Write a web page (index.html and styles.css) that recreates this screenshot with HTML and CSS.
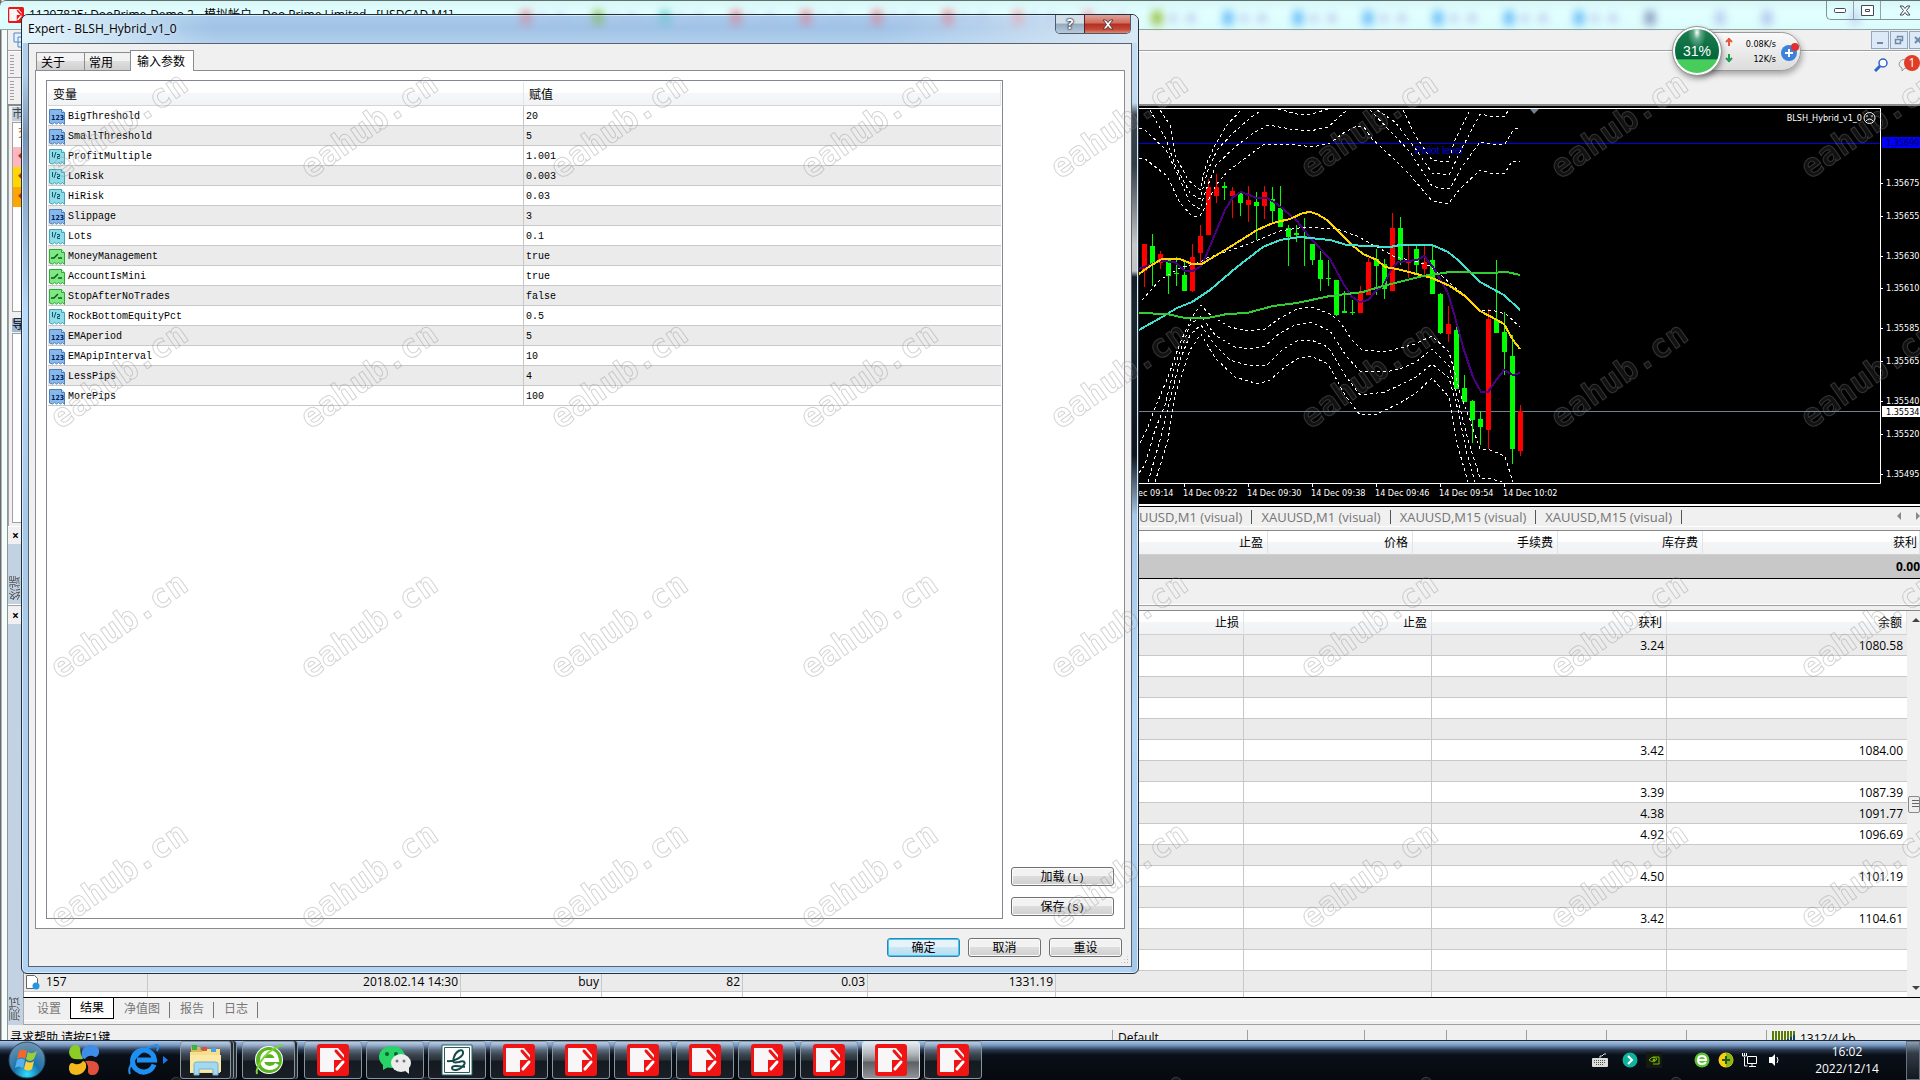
FILE: index.html
```html
<!DOCTYPE html>
<html lang="zh-CN">
<head>
<meta charset="UTF-8">
<meta name="viewport" content="width=device-width, initial-scale=1.0">
<title>Expert - BLSH_Hybrid_v1_0</title>
<link rel="stylesheet" href="styles.css">
</head>
<body>

<!-- Shared icons -->
<svg class="defs" aria-hidden="true">
    <symbol id="i-int" viewBox="0 0 16 16">
        <path d="M.5 .5h12l3 3v12l-2-2-2 1.500-2-1.500-2 1.500-2-1.500-2 1.500-3-1z" fill="#86b8ec" stroke="#4a80bd"/>
        <path d="M12.500 .5v3h3" fill="#d8eaff" stroke="#4a80bd"/>
        <text x="2" y="11" font-size="7" font-weight="bold" font-family="DejaVu Sans Condensed" fill="#08245c">123</text>
    </symbol>
    <symbol id="i-double" viewBox="0 0 16 16">
        <path d="M.5 .5h12l3 3v12l-2-2-2 1.500-2-1.500-2 1.500-2-1.500-2 1.500-3-1z" fill="#8edcea" stroke="#43a6b8"/>
        <path d="M12.500 .5v3h3" fill="#d8f8ff" stroke="#43a6b8"/>
        <path d="M3.500 3v5M7 3 5 9M8 5.500h2.500v2H8.500v2H11" fill="none" stroke="#0a5563"/>
    </symbol>
    <symbol id="i-bool" viewBox="0 0 16 16">
        <path d="M.5 .5h12l3 3v12l-2-2-2 1.500-2-1.500-2 1.500-2-1.500-2 1.500-3-1z" fill="#7ee884" stroke="#2ea836"/>
        <path d="M12.500 .5v3h3" fill="#d4ffd8" stroke="#2ea836"/>
        <path d="M2 9h3l4-4M9 9h4" fill="none" stroke="#0b5c14" stroke-width="1.500"/>
    </symbol>
    <symbol id="i-mt" viewBox="0 0 32 32">
        <rect width="32" height="32" rx="3" fill="#f01414"/>
        <path d="M3 4h17v12h-3v12H3z" fill="#f8f6f6"/>
        <path d="M17 4h12v12H17z" fill="#f01414"/>
        <path d="M3 4h14l3 12h-3v12H3z" fill="#f8f6f6"/>
        <path d="M17 4h4l6 7v5H17z" fill="#f8f6f6"/>
        <path d="m19 7 7 8" stroke="#f01414" stroke-width="3" stroke-linecap="round"/>
        <path d="m20 25 6-7" stroke="#fff" stroke-width="3" stroke-linecap="round"/>
    </symbol>
    <symbol id="i-e" viewBox="0 0 32 32">
        <path d="M27 20.500A11 11 0 1 1 27.500 16H10" fill="none" stroke="currentColor" stroke-width="5"/>
        <path d="M3 30C-1 22 14 4 29 1c3 0 2 4 1 6" fill="none" stroke="currentColor" stroke-width="2"/>
    </symbol>
</svg>

<main class="terminal">
    <header class="titlebar">
        <svg class="glass" width="1920" height="30" id="glass"></svg>
        <svg class="app-icon"><use href="#i-mt"/></svg>
        <span class="app-title">11297825: DooPrime-Demo 2 - 模拟帐户 - Doo Prime Limited - [USDCAD,M1]</span>
        <div class="sysbuttons">
            <button aria-label="最小化"><svg width="12" height="5"><rect x=".5" y=".5" width="11" height="4" rx="1" fill="#fff" stroke="#444a5a"/></svg></button>
            <button aria-label="还原"><svg width="13" height="11"><path d="M.5.5h12v10H.5zM4.500 4.500h4v2h-4z" fill="#fff" stroke="#444a5a"/></svg></button>
            <button aria-label="关闭"><svg width="12" height="11"><path d="M1 1h3l2 2.500L8 1h3L7.500 5.500 11 10H8L6 7.500 4 10H1l3.500-4.500z" fill="#fff" stroke="#444a5a"/></svg></button>
        </div>
    </header>

    <div class="menubar">
        <svg class="menu-icon" width="14" height="16"><path d="M1 1h8v9H1zM5 5h8v10H5z" fill="#e8f2fc" stroke="#4a86cc"/></svg>
        <div class="mdi">
            <button aria-label="最小化"><svg width="10" height="10"><path d="M2 8h6" stroke="#6f8aa8" stroke-width="2"/></svg></button>
            <button aria-label="还原"><svg width="10" height="10"><path d="M3.500 3V1.500h5v4H7M1.500 4.500h5v4h-5z" fill="none" stroke="#6f8aa8" stroke-width="1.500"/></svg></button>
            <button aria-label="关闭"><svg width="10" height="10"><path d="m2 2 6 6M8 2 2 8" stroke="#6f8aa8" stroke-width="2"/></svg></button>
        </div>
    </div>
    <div class="toolbar">
        <div class="toolbar-row"><span class="grip"></span>
            <div class="notify">
                <svg width="14" height="14"><circle cx="9" cy="5" r="4" fill="#fff" stroke="#2f62d0" stroke-width="1.500"/><path d="m6 8-5 5" stroke="#2f62d0" stroke-width="3"/></svg>
                <svg width="14" height="14"><path d="M1 6q1-5 8-5h5v9H7l-3 3V10Q1 9 1 6z" fill="#eceef2" stroke="#9a9a9a"/></svg>
                <b class="badge">1</b>
            </div>
        </div>
        <div class="toolbar-row"><span class="grip"></span></div>
    </div>

    <section class="workspace">
        <aside class="docks">
            <h2 class="dock-title">市</h2>
            <div class="watch">
                <p class="watch-head">交</p>
                <p class="pink">◆</p>
                <p class="gold">◆</p>
                <p class="orange">◆</p>
            </div>
            <h2 class="dock-title active">导</h2>
            <div class="navigator"></div>
        </aside>
        <div class="charts">
            <svg class="chart" id="chart" viewBox="208 106 1712 398" preserveAspectRatio="xMaxYMin slice">
                <path d="M208 108.500h1672.500v375H208" fill="none" stroke="#fff"/>
                <path d="M208 143.500h1672" stroke="#0000e8"/>
                <path d="M208 411.500h1672" stroke="#708090"/>
                <path d="M1530 109h9l-5 5z" fill="#708090"/>
                <text x="1415" y="154" class="pivot">Piviot level</text>
                <g id="candles" shape-rendering="crispEdges"></g>
                <g class="bands" shape-rendering="crispEdges">
                    <path d="M1139 158h5l23 18 13 27 12 13h8l6-11 10-20 12-14 19-14 16-12 7-1 27 1 16 2 17-4 15-11 12-6 7 1 8 12 21 19 17 17 22 26 16 3 12-15 20-19 10 3h15l7-12h8"/>
                    <path d="M1139 128l5 1 22 21 12 25 12 28 10 6 6-19 10-25 19-18 17-13 16-9 22 4 20 2 18-4 19-17M1370 110l23 24 17 18 22 34 8 2 10 1 11-21 19-26 10 2h15l9-15 6-1"/>
                    <path d="M1150 110l16 29 9 26 15 28 10 6 8-29 9-20 15-16 18-16 12-8M1278 109l19 5h15l16-5M1377 110l18 12 20 26 17 25 17 2 11-23 20-38 10 2h15l4-7"/>
                    <path d="M1160 110l10 15 5 30 13 25 12 10 6-25 9-20 12-20 14-15M1403 110l12 25 10 15 7 10 16 2 7-22 15-30"/>
                    <path d="M1142 300l18-20 20-12 20-6 7-4 33-11 23-9 17-7 25-4 32 2 20 7 20 11 18 10 20 4 15 5 20 17 15 13 15 14 15 1 11 3 14 13"/>
                    <path d="M1140 443l8-16 7-19 13-31 12-34 12-26 9-12 7 8 7 5 15 9 18 4 17-2 15-11 17-9 15-2 18 7 10 8 12 18 10 10 23 2 15-4 15-4 17-8 17 16 6 21 5 20 10 27 10 29 10 1 10 4 5 3 8 25"/>
                    <path d="M1139 473l6-8 10-35 10-25 10-40 15-40 11-9 14 19 20 12 15 2 15-3 15-13 15-8 16-3 19 9 17 26 13 14 25 1 15-3 16-7 16-13 17 17 9 34 10 40 12 38 12 1 10 3"/>
                    <path d="M1148 482l12-42 10-40 10-40 10-25 11-10 14 20 15 15 20 6 17-1 15-15 15-9 14-1 17 7 17 28 15 20 25-3 15-7 16-8 16-13 17 14 9 32 8 40 9 32"/>
                    <path d="M1155 482l13-42 7-45 15-45 11-16 14 24 20 19 23 7 12-4 15-13 12-8 14-3 17 8 17 31 15 20 17-1 23-11 16-10 16-15 17 19 7 43 12 42"/>
                </g>
                <g class="averages" shape-rendering="crispEdges">
                    <polyline stroke="#4b0082" points="1139,269 1160,261 1175,262 1185,271 1193,271 1201,266 1205,258 1225,210 1233,197 1241,192 1257,198 1267,198 1277,204 1297,221 1312,240 1330,259 1343,283 1352,297 1360,302 1368,300 1377,290 1383,286 1392,268 1398,262 1417,260 1424,256 1433,267 1448,293 1455,317 1463,347 1473,377 1481,392 1488,392 1497,379 1504,370 1513,375 1520,373"/>
                    <polyline stroke="#ffd700" points="1139,274 1150,266 1162,259 1180,259 1192,264 1202,264 1210,259 1230,247 1257,230 1273,223 1290,219 1303,213 1310,212 1317,214 1327,220 1340,233 1352,245 1363,254 1377,260 1385,267 1397,269 1432,278 1450,286 1465,296 1480,311 1497,320 1504,324 1513,340 1520,349"/>
                    <polyline stroke="#40e0d0" points="1139,330 1162,317 1177,308 1192,302 1210,290 1237,267 1263,247 1280,240 1300,237 1330,240 1347,245 1390,247 1400,245 1432,245 1448,252 1458,260 1480,282 1504,295 1520,310"/>
                    <polyline stroke="#32cd32" points="1139,313 1167,314 1185,318 1208,318 1227,314 1247,313 1273,306 1297,303 1330,296 1363,292 1383,286 1423,276 1450,272 1490,273 1507,272 1520,275"/>
                </g>
                <text x="1862" y="121" class="axis" text-anchor="end">BLSH_Hybrid_v1_0</text>
                <g fill="none" stroke="#fff"><circle cx="1869.500" cy="118" r="5.500"/><path d="M1866 121q3.500-4 7 0M1866 116h2M1871 116h2"/></g>
                <g id="prices"></g>
                <g id="times"></g>
            </svg>
            <nav class="chart-tabs">
                <a href="#">XAUUSD,M1 (visual)</a>
                <a href="#">XAUUSD,M1 (visual)</a>
                <a href="#">XAUUSD,M15 (visual)</a>
                <a href="#">XAUUSD,M15 (visual)</a>
                <span class="scroller"><i class="left"></i><i class="right"></i></span>
            </nav>
        </div>
    </section>

    <section class="panel trade">
        <div class="strip"><button aria-label="关闭终端">×</button><span>终端</span></div>
        <table class="trade-table">
            <colgroup><col><col class="w-profit-hidden"><col class="w-fee"><col class="w-fee"><col class="w-fee"><col class="w-total"></colgroup>
            <thead><tr><th></th><th>止盈</th><th>价格</th><th>手续费</th><th>库存费</th><th>获利</th></tr></thead>
            <tbody><tr><td colspan="6">0.00</td></tr></tbody>
        </table>
    </section>

    <section class="panel tester">
        <div class="strip"><button aria-label="关闭测试">×</button><span>测试</span></div>
        <div class="tester-main">
            <div class="results">
                <table class="result-table">
                    <colgroup><col class="c-id"><col class="c-time"><col class="c-type"><col class="c-type"><col class="c-lot"><col class="c-price"><col class="c-price"><col class="c-price"><col class="c-profit"><col></colgroup>
                    <thead><tr><th>#</th><th>时间</th><th>类型</th><th>订单</th><th>手数</th><th>价格</th><th>止损</th><th>止盈</th><th>获利</th><th>余额</th></tr></thead>
                    <tbody id="results"></tbody>
                </table>
                <div class="scrollbar"><i class="up"></i><i class="thumb"></i><i class="down"></i></div>
            </div>
            <nav class="tester-tabs">
                <a href="#">设置</a><a href="#" class="current">结果</a><a href="#">净值图</a><a href="#">报告</a><a href="#">日志</a>
            </nav>
        </div>
    </section>

    <footer class="status">
        <span class="help">寻求帮助,请按F1键</span>
        <span class="s-profile">Default</span>
        <span class="s-date"></span>
        <span class="s-price"></span>
        <span class="s-small"></span>
        <span class="s-small"></span>
        <span class="s-small"></span>
        <span class="s-small"></span>
        <span class="s-net"><svg width="23" height="14"><path d="M1 0v14M4 0v14M7 0v14M10 0v14M13 0v14M16 0v14M19 0v14M22 0v14" stroke="#5c7a08" stroke-width="2"/><path d="M7 13v1M10 11v3M13 9v5M16 8v6M19 6v8M22 4v10" stroke="#10456e" stroke-width="2"/></svg>1312/4 kb</span>
    </footer>
</main>

<!-- Expert properties dialog -->
<section class="dialog" role="dialog" aria-labelledby="dialog-title">
    <header class="dialog-title">
        <svg class="glass" width="1116" height="28" id="dialogGlass"></svg>
        <h1 id="dialog-title">Expert - BLSH_Hybrid_v1_0</h1>
        <div class="dialog-buttons">
            <button aria-label="帮助">?</button><button class="close" aria-label="关闭"><svg width="12" height="11"><path d="M1 1h3l2 2.500L8 1h3L7.500 5.500 11 10H8L6 7.500 4 10H1l3.500-4.500z" fill="#fff" stroke="#5a3a44"/></svg></button>
        </div>
    </header>
    <div class="dialog-body">
        <nav class="tabs">
            <button class="tab">关于</button><button class="tab second">常用</button><button class="tab current">输入参数</button>
        </nav>
        <div class="pane">
            <div class="list">
                <table class="inputs">
                    <colgroup><col class="name"><col></colgroup>
                    <thead><tr><th>变量</th><th>赋值</th></tr></thead>
                    <tbody>
                        <tr><td><svg><use href="#i-int"/></svg>BigThreshold</td><td>20</td></tr>
                        <tr><td><svg><use href="#i-int"/></svg>SmallThreshold</td><td>5</td></tr>
                        <tr><td><svg><use href="#i-double"/></svg>ProfitMultiple</td><td>1.001</td></tr>
                        <tr><td><svg><use href="#i-double"/></svg>LoRisk</td><td>0.003</td></tr>
                        <tr><td><svg><use href="#i-double"/></svg>HiRisk</td><td>0.03</td></tr>
                        <tr><td><svg><use href="#i-int"/></svg>Slippage</td><td>3</td></tr>
                        <tr><td><svg><use href="#i-double"/></svg>Lots</td><td>0.1</td></tr>
                        <tr><td><svg><use href="#i-bool"/></svg>MoneyManagement</td><td>true</td></tr>
                        <tr><td><svg><use href="#i-bool"/></svg>AccountIsMini</td><td>true</td></tr>
                        <tr><td><svg><use href="#i-bool"/></svg>StopAfterNoTrades</td><td>false</td></tr>
                        <tr><td><svg><use href="#i-double"/></svg>RockBottomEquityPct</td><td>0.5</td></tr>
                        <tr><td><svg><use href="#i-int"/></svg>EMAperiod</td><td>5</td></tr>
                        <tr><td><svg><use href="#i-int"/></svg>EMApipInterval</td><td>10</td></tr>
                        <tr><td><svg><use href="#i-int"/></svg>LessPips</td><td>4</td></tr>
                        <tr><td><svg><use href="#i-int"/></svg>MorePips</td><td>100</td></tr>
                    </tbody>
                </table>
            </div>
            <div class="side">
                <button class="btn">加载<kbd>(L)</kbd></button>
                <button class="btn">保存<kbd>(S)</kbd></button>
            </div>
        </div>
        <footer class="actions">
            <button class="btn default">确定</button>
            <button class="btn">取消</button>
            <button class="btn">重设</button>
        </footer>
        <span class="resize"></span>
    </div>
</section>

<!-- Network speed widget -->
<aside class="speed">
    <div class="ball">31%</div>
    <div class="pill">
        <svg width="8" height="28"><path d="M4 0v8M1 4l3-3 3 3" stroke="#e8573c" stroke-width="2" fill="none"/><path d="M4 16v8M1 20l3 3 3-3" stroke="#1f9c50" stroke-width="2" fill="none"/></svg>
        <p>0.08K/s<br>12K/s</p>
        <svg width="20" height="20"><circle cx="9" cy="11" r="8" fill="#3a82dc"/><path d="M9 7v8M5 11h8" stroke="#fff" stroke-width="2"/><circle cx="15" cy="5" r="4" fill="#e03030"/></svg>
    </div>
</aside>

<nav class="taskbar">
    <button class="pin start" aria-label="开始">
        <svg width="38" height="38"><defs><radialGradient id="orb" cx=".5" cy=".9" r=".9"><stop offset="0" stop-color="#2fe0ff"/><stop offset=".4" stop-color="#1872ac"/><stop offset="1" stop-color="#7795ae"/></radialGradient></defs>
            <circle cx="19" cy="19" r="18" fill="url(#orb)" stroke="#284a66"/>
            <path d="M11 10q4-3 8 0l-2 8q-4-3-8 0z" fill="#f0682c"/><path d="M20 11q4 3 9-1l-3 8q-4 4-8 0z" fill="#9cce3c"/><path d="M9 19q4-3 8 0l-2 8q-4-3-8 0z" fill="#58b0f0"/><path d="M18 20q4 3 8 0l-2 8q-4 3-8 0z" fill="#fcd03c"/></svg>
    </button>
    <button class="pin" aria-label="应用">
        <svg width="32" height="32"><path d="M15 15Q1 17 1 8q1-8 8-7 2 0 3 3 0 6 3 11z" fill="#8ccc24"/><path d="M17 15q-5-1-3-8 3-7 10-6 8 1 7 8-2 6-6 3-5-1-8 3z" fill="#3e8ee8"/><path d="M15 17q4 1 3 7-3 7-10 7-8-1-7-8 1-6 6-3 5 1 8-3z" fill="#f4b81c"/><path d="M17 17q14-2 14 7-1 8-8 7-3-1-3-4 1-6-3-10z" fill="#e0503c"/></svg>
    </button>
    <button class="pin ie" aria-label="Internet Explorer"><svg width="32" height="32"><use href="#i-e"/></svg><i></i></button>
    <button class="task folder stack" aria-label="资源管理器">
        <svg width="34" height="32"><path d="M2 3h9l1 3h18v22H2z" fill="#d8b858"/><path d="M1 8h12l2-3h16v24H1z" fill="#f6df8c"/><path d="M3 1h5v5H3z" fill="#40b040"/><path d="M13 3h5v4h-5z" fill="#d85040"/><path d="M22 4h5v4h-5z" fill="#48a0e0"/><path d="M1 11h31v17H1z" fill="#fae8a4"/><path d="M5 31V20q0-2 3-2h18q3 0 3 2v11h-5v-6H10v6z" fill="#a4d8f0" stroke="#6cb4d8"/></svg>
    </button>
    <button class="task browser stack" aria-label="浏览器"><svg width="30" height="32"><circle cx="15" cy="16" r="14" fill="#fff"/><circle cx="15" cy="16" r="13" fill="#58b420"/><path d="M23 20q-2 4-8 4-7-1-7-8t7-8q7 0 8 8H9" stroke="#fff" stroke-width="4" fill="none"/><path d="M3 30C1 22 14 4 29 1" fill="none" stroke="#7cd038" stroke-width="2"/></svg></button>
    <button class="task" aria-label="MetaTrader"><svg width="32" height="32"><use href="#i-mt"/></svg></button>
    <button class="task" aria-label="微信"><svg width="34" height="30"><ellipse cx="14" cy="12" rx="13" ry="11" fill="#28d468"/><path d="m5 18 0 7 7-4z" fill="#28d468"/><circle cx="9" cy="9" r="2" fill="#0a6030"/><circle cx="18" cy="9" r="2" fill="#0a6030"/><ellipse cx="23" cy="18" rx="10" ry="9" fill="#ececec"/><path d="m26 25 5 4v-7z" fill="#ececec"/><circle cx="19" cy="16" r="1.500" fill="#777"/><circle cx="26" cy="16" r="1.500" fill="#777"/></svg></button>
    <button class="task" aria-label="编辑器"><svg width="32" height="32"><path d="M1 1h30v30H1z" fill="#fff" stroke="#24605c"/><path d="M3.500 3.500h25v25h-25z" fill="#fff" stroke="#24605c"/><path d="M6 17c8 1 17-5 16-9s-7-1-9 5 0 6 5 5c6-2 7 1 4 4-4 5-11 5-11 2s6-2 13-1" fill="none" stroke="#144c4c" stroke-width="2"/></svg></button>
    <button class="task" aria-label="MetaTrader"><svg width="32" height="32"><use href="#i-mt"/></svg></button>
    <button class="task" aria-label="MetaTrader"><svg width="32" height="32"><use href="#i-mt"/></svg></button>
    <button class="task" aria-label="MetaTrader"><svg width="32" height="32"><use href="#i-mt"/></svg></button>
    <button class="task" aria-label="MetaTrader"><svg width="32" height="32"><use href="#i-mt"/></svg></button>
    <button class="task" aria-label="MetaTrader"><svg width="32" height="32"><use href="#i-mt"/></svg></button>
    <button class="task" aria-label="MetaTrader"><svg width="32" height="32"><use href="#i-mt"/></svg></button>
    <button class="task active" aria-label="MetaTrader"><svg width="32" height="32"><use href="#i-mt"/></svg></button>
    <button class="task" aria-label="MetaTrader"><svg width="32" height="32"><use href="#i-mt"/></svg></button>

    <div class="tray">
        <svg class="keyboard" width="16" height="16"><path d="M8 6V4l2 0 2-2 2 0" fill="none" stroke="#ddd"/><rect y="6" width="16" height="9" rx="1" fill="#ddd"/><path d="M2 8.500h12M2 10.500h12M4 12.500h8" stroke="#555" stroke-dasharray="1 1"/></svg>
        <svg width="16" height="16"><circle cx="8" cy="8" r="7.500" fill="#0eb39c"/><path d="m6 4 4 4-4 4" fill="none" stroke="#fff" stroke-width="2"/></svg>
        <svg class="nvidia" width="16" height="16"><path d="M0 0h16v16H0z" fill="#151a10"/><path d="M3 8q4-5 8-1-3 5-8 1zM7 5h6v7H7" fill="none" stroke="#76b900"/><circle cx="8" cy="8" r="1.500" fill="#76b900"/></svg>
        <svg width="16" height="16"><circle cx="8" cy="8" r="7.500" fill="#5cc432"/><path d="M12 10q-1 2-4 2-4 0-4-4t4-4q4 0 4 4H5" stroke="#fff" stroke-width="2" fill="none"/></svg>
        <svg width="16" height="16"><circle cx="8" cy="8" r="7.500" fill="#f8d010"/><path d="M8 1a7 7 0 0 1 0 14z" fill="#88b818"/><path d="M8 4v8M4 8h8" stroke="#205818" stroke-width="2"/></svg>
        <svg width="16" height="16"><path d="M5.500 4.500h9v7h-9zM10 12v3M7 14.500h7M2.500 1v3M.5 1v3h4V1M2.500 5v9h3" fill="none" stroke="#fff"/></svg>
        <svg width="16" height="16"><path d="M3 5h3l3-3v12L6 11H3z" fill="#fff"/><path d="M11 5q2 3 0 6" fill="none" stroke="#fff"/></svg>
        <time>16:02<br>2022/12/14</time>
    </div>
    <button class="show-desktop" aria-label="显示桌面"></button>
</nav>

<svg class="watermark" aria-hidden="true">
    <defs>
        <pattern id="mark" width="250" height="250" patternUnits="userSpaceOnUse">
            <text transform="translate(60 180) rotate(-35)">eahub.cn</text>
        </pattern>
    </defs>
    <rect width="100%" height="100%" fill="url(#mark)"/>
</svg>

<script src="script.js"></script>
</body>
</html>
```

FILE: styles.css
```css
* {
    box-sizing: border-box;
}
body {
    display: flex;
    flex-direction: column;
    height: 100vh;
    margin: 0;
    overflow: hidden;
    position: relative;
    color: #000;
    font: 12px/16px "Open Sans", "Noto Sans CJK SC", sans-serif;
}
button {
    margin: 0;
    padding: 0;
    border: 0;
    background: none;
    color: inherit;
    font: inherit;
}
a {
    color: inherit;
    text-decoration: none;
}
h1, h2, p {
    margin: 0;
    font: inherit;
}
svg {
    display: block;
    flex: none;
}
table {
    width: 100%;
    table-layout: fixed;
    border-collapse: separate;
    border-spacing: 0;
}
th, td {
    padding: 0;
    overflow: hidden;
    font-weight: normal;
    white-space: nowrap;
}
.defs {
    position: absolute;
    width: 0;
    height: 0;
}

/* Main window */
.terminal {
    flex: 1;
    min-height: 0;
    display: flex;
    flex-direction: column;
    padding-left: 8px;
    overflow: hidden;
    background: linear-gradient(90deg, #6a6a6a 0 1px, #f4fcfc 2px 7px, #8c9494 7px 8px, #f0f0f0 8px);
}
.titlebar {
    flex: none;
    display: flex;
    height: 30px;
    margin-left: -8px;
    border-top: 1px solid #5f6f70;
    border-bottom: 1px solid #93a5a2;
    background: linear-gradient(#d8f6f6, #e2ffff 40%, #dcfcfc);
    position: relative;
    border-radius: 6px 0 0 0;
}
.glass {
    position: absolute;
    left: 0;
    top: 0;
}
.glass g {
    filter: blur(4px);
}
.app-icon {
    width: 16px;
    height: 16px;
    margin: 6px 5px 0 8px;
    z-index: 0;
}
.app-title {
    margin-top: 6px;
    z-index: 0;
}
.sysbuttons {
    display: flex;
    margin-left: auto;
    width: 94px;
    height: 19px;
    overflow: hidden;
    border: 1px solid #7d9494;
    border-width: 0 0 1px 1px;
    border-radius: 0 0 0 5px;
    z-index: 0;
}
.sysbuttons button {
    display: flex;
    align-items: center;
    justify-content: center;
    flex: none;
    width: 27px;
    border-right: 1px solid #8fa5a5;
}
.sysbuttons button:last-child {
    width: 48px;
}
.menubar {
    flex: none;
    display: flex;
    justify-content: space-between;
    height: 22px;
    border-bottom: 1px solid #fff;
    box-shadow: inset 0 -1px #a0a0a0;
    background: #f0f0f0;
    overflow: hidden;
}
.menu-icon {
    margin: 2px 0 0 5px;
}
.mdi {
    display: flex;
    gap: 1px;
    margin-top: 1px;
    width: 49px;
}
.mdi button {
    display: flex;
    flex: none;
    align-items: center;
    justify-content: center;
    width: 18px;
    height: 18px;
    border: 1px solid #91a7bf;
    background: #dce9f6;
}
.toolbar {
    flex: none;
    height: 54px;
    background: #f0f0f0;
    border-bottom: 2px solid #8a8a8a;
}
.toolbar-row {
    display: flex;
    height: 26px;
    padding: 3px 2px;
    border-bottom: 1px solid #dcdcdc;
}
.toolbar-row + .toolbar-row {
    border: 0;
}
.toolbar-row:first-child {
    border-image: linear-gradient(90deg, #a0a0a0 40px, #f0f0f0 40px) 1;
}
.grip {
    width: 4px;
    background: repeating-linear-gradient(#a0a0a0 0 1px, #f0f0f0 1px 3px);
}
.notify {
    display: flex;
    gap: 10px;
    margin-left: auto;
    padding-top: 3px;
    position: relative;
    width: 44px;
}
.badge {
    position: absolute;
    right: -2px;
    top: 0;
    width: 16px;
    height: 16px;
    border-radius: 8px;
    background: #e03c28;
    color: #fff;
    text-align: center;
    font-weight: normal;
}

/* Docks and chart */
.workspace {
    flex: none;
    display: flex;
    height: 420px;
}
.docks {
    flex: none;
    width: 200px;
    padding: 1px 1px 0 3px;
    border-left: 1px solid #a0a0a0;
}
.dock-title {
    height: 14px;
    line-height: 14px;
    background: #bfccda;
    color: #444;
}
.dock-title.active {
    margin-top: 6px;
    background: #9db7d6;
    color: #000;
}
.watch, .navigator {
    height: 190px;
    margin-top: 1px;
    border: 1px solid #a0a0a0;
    background: #fff;
}
.watch p {
    height: 20px;
    padding-left: 5px;
    line-height: 20px;
    color: #b03010;
}
.watch .watch-head {
    height: 24px;
    color: #c07030;
}
.pink {
    background: #ffb6c1;
}
.gold {
    background: #ffd700;
}
.orange {
    background: #ffa500;
}
.charts {
    flex: 1;
    min-width: 0;
}
.chart {
    width: 100%;
    height: 398px;
    background: #000;
}
.axis {
    font: 9px "DejaVu Sans Condensed", "DejaVu Sans", sans-serif;
    fill: #fff;
}
.axis.dark {
    fill: #000;
}
.axis.blue {
    fill: #000040;
}
.pivot {
    font: 10px "Liberation Sans", sans-serif;
    fill: #0000e8;
}
.bands path {
    fill: none;
    stroke: #fff;
    stroke-dasharray: 3 3;
}
.averages polyline {
    fill: none;
    stroke-width: 2;
}
.chart-tabs {
    display: flex;
    justify-content: flex-end;
    height: 22px;
    padding-top: 3px;
    border-top: 1px solid #fff;
    box-shadow: inset 0 1px #fff, inset 0 2px #000;
    color: #757575;
    background: #f0f0f0;
}
.chart-tabs a {
    height: 14px;
    margin-top: 2px;
    padding: 0 9px;
    border-right: 1px solid #555;
    font-size: 13px;
    line-height: 14px;
    white-space: nowrap;
}
.scroller {
    display: flex;
    justify-content: flex-end;
    gap: 15px;
    width: 238px;
    padding-top: 4px;
}
.left, .right {
    height: 8px;
    border: 4px solid transparent;
    border-right-color: #888;
    border-left-width: 0;
}
.right {
    border-left: 4px solid #888;
    border-right-width: 0;
}

/* Bottom panels */
.panel {
    display: flex;
    padding-top: 4px;
    border-top: 1px solid #fff;
    background: #f0f0f0;
}
.strip {
    flex: none;
    display: flex;
    flex-direction: column;
    align-items: center;
    justify-content: space-between;
    width: 15px;
    padding: 0 1px 4px;
    background: linear-gradient(#f0f0f0 14px, #c3d2e2 14px);
    color: #555;
}
.strip button {
    height: 12px;
    color: #000;
    font-weight: bold;
    line-height: 12px;
}
.strip span {
    width: 12px;
    line-height: 12px;
    writing-mode: vertical-rl;
    transform: rotate(180deg);
}
.trade {
    flex: none;
    height: 79px;
    padding-top: 3px;
    border-bottom: 1px solid #fff;
}
.trade-table {
    height: 49px;
    border-top: 1px solid #888;
    border-bottom: 1px solid #000;
}
.w-profit-hidden {
    width: 200px;
}
.w-fee {
    width: 145px;
}
.w-total {
    width: 217px;
}
.panel th {
    height: 24px;
    padding-right: 4px;
    border-right: 1px solid #e0e3e8;
    border-bottom: 1px solid #d0d0d0;
    background: linear-gradient(#fff 45%, #f4f5f7 50%, #f1f2f4);
    text-align: right;
}
.trade-table th:last-child {
    padding-right: 2px;
}
.trade-table td {
    height: 22px;
    background: #c8c8c8;
    font-weight: bold;
    text-align: right;
}
.tester {
    flex: 1;
    min-height: 0;
    border-top-color: #a0a0a0;
    padding-top: 4px;
}
.tester-main {
    flex: 1;
    min-width: 0;
    display: flex;
    flex-direction: column;
}
.results {
    flex: 1;
    min-height: 0;
    display: flex;
    overflow: hidden;
    border-top: 1px solid #888;
    border-left: 1px solid #888;
    border-bottom: 1px solid #000;
    background: #fff;
}
.result-table {
    flex: 1;
    min-width: 0;
    height: max-content;
}
.c-id {
    width: 124px;
}
.c-time {
    width: 313px;
}
.c-type {
    width: 141px;
}
.c-lot {
    width: 125px;
}
.c-price {
    width: 188px;
}
.c-profit {
    width: 235px;
}
.result-table td {
    height: 21px;
    padding: 2px 2px 0 0;
    border-right: 1px solid #c8c8c8;
    border-bottom: 1px solid #c8c8c8;
    line-height: 18px;
    text-align: right;
}
.result-table td:last-child {
    border-right: 0;
    padding-right: 4px;
}
.result-table tr:nth-child(odd) td {
    background: #ebebeb;
}
.result-table td:first-child {
    text-align: left;
}
.order {
    display: flex;
    align-items: center;
    gap: 6px;
    padding-left: 2px;
}
.scrollbar {
    display: flex;
    flex-direction: column;
    align-items: flex-end;
    justify-content: space-between;
    width: 13px;
    overflow: hidden;
    padding: 7px 0;
    background: #f0f0f0;
}
.up, .down {
    border: 4px solid transparent;
    border-bottom: 4px solid #444;
    border-top: 0;
}
.down {
    border-top: 4px solid #444;
    border-bottom: 0;
}
.thumb {
    width: 12px;
    height: 17px;
    border: 1px solid #888;
    border-radius: 2px;
    background: repeating-linear-gradient(#666 0 1px, #eee 1px 3px) 3px 3px / 8px 9px no-repeat, #eee;
}
.tester-tabs {
    display: flex;
    flex: none;
    height: 27px;
    color: #777;
    border-left: 1px solid #aaa;
    border-bottom: 1px solid #a0a0a0;
    box-shadow: inset 0 -3px #f0f0f0, inset 0 -4px #fff;
}
.tester-tabs a {
    height: 16px;
    margin-top: 4px;
    padding: 0 9px 0 10px;
    border-right: 1px solid #777;
    line-height: 14px;
}
.tester-tabs a:first-child {
    padding-left: 13px;
    border: 0;
}
.tester-tabs .current {
    height: 21px;
    margin-top: 0;
    padding: 3px 9px 0;
    border: 1px solid #000;
    border-top: 0;
    background: #fff;
    color: #000;
}
.status {
    display: flex;
    flex: none;
    height: 15px;
    overflow: hidden;
    background: #f0f0f0;
}
.status span {
    flex: none;
    height: 20px;
    margin-top: 5px;
    padding-left: 5px;
    border-left: 1px solid #a0a0a0;
}
.status .help {
    flex: 1;
    padding-left: 2px;
    border: 0;
}
.status .s-profile {
    width: 135px;
}
.status .s-date {
    width: 117px;
}
.status .s-price {
    width: 82px;
}
.status .s-small {
    width: 80px;
}
.status .s-net {
    display: flex;
    gap: 5px;
    width: 154px;
    padding-top: 1px;
}

/* Dialog */
.dialog {
    position: absolute;
    left: 21px;
    top: 14px;
    display: flex;
    flex-direction: column;
    width: 1118px;
    height: 960px;
    padding: 0 6px 6px;
    border: 1px solid #22303c;
    border-radius: 7px 7px 6px 6px;
    box-shadow: inset 0 0 0 1px #dcecf8;
    background: linear-gradient(#c4dcf2 88px, #3a444e 100px, #333d48 150px, #c8c8c8 230px, #c4c4c4 256px, #141c24 262px, #1c2830 300px, #0c141c 440px, #a8c8e8 500px, #b4d8f8 700px, #a4c8ea) right / 7px 100% no-repeat,
        linear-gradient(#b0cfec 60px, #7894b4 120px, #b8dcfc 300px, #a8c8e8 500px, #b2d4f4);
}
.dialog-title {
    flex: none;
    display: flex;
    justify-content: space-between;
    height: 28px;
    margin: 0 -6px;
    padding: 0 7px 0 6px;
    border-radius: 6px 6px 0 0;
    box-shadow: inset 0 1px #dcecf8;
    background: linear-gradient(90deg, #e4f6fc 0, #b4d2ee00 190px, #b4d2ee00 860px, #d8e8f4), linear-gradient(#a9cbec, #a0c2e6 45%, #b2d0ee);
    position: relative;
}
.dialog-title h1 {
    margin: 5px 0 0;
    line-height: 17px;
    text-shadow: 0 0 6px #fff;
    z-index: 0;
}
.dialog-buttons {
    display: flex;
    width: 76px;
    height: 19px;
    border: 1px solid #4c5a6a;
    border-top: 0;
    border-radius: 0 0 5px 5px;
    overflow: hidden;
    color: #fff;
    font-weight: bold;
    z-index: 0;
}
.dialog-buttons button {
    display: flex;
    align-items: center;
    justify-content: center;
    width: 28px;
    background: linear-gradient(#d2dfe9 45%, #94a9bd 50%, #b6cadc);
    text-shadow: 0 0 1px #223, 0 0 2px #223, 0 0 2px #223;
    font-size: 14px;
}
.dialog-buttons .close {
    flex: 1;
    border-left: 1px solid #54222a;
    background: linear-gradient(#e0a298 0, #cf6b5c 45%, #b2301c 50%, #c4483a 80%, #e08a70);
}
.dialog-body {
    flex: 1;
    min-height: 0;
    display: flex;
    flex-direction: column;
    padding: 6px;
    border: 1px solid #59636d;
    background: #f0f0f0;
    position: relative;
}
.tabs {
    display: flex;
    align-items: flex-end;
    height: 21px;
    padding-left: 1px;
    margin-bottom: -1px;
    z-index: 0;
}
.tab {
    width: 49px;
    height: 19px;
    padding: 0 0 0 4px;
    border: 1px solid #8b8b94;
    background: linear-gradient(#f2f2f2 45%, #dedede 50%, #d0d0d0);
    line-height: 19px;
    text-align: left;
}
.tab.second {
    width: 46px;
    border-left: 0;
}
.tab.current {
    width: 64px;
    height: 21px;
    padding-left: 6px;
    border-bottom: 0;
    margin-left: -1px;
    background: #fff;
}
.pane {
    flex: 1;
    min-height: 0;
    display: flex;
    gap: 8px;
    padding: 9px 10px;
    border: 1px solid #8b8b94;
    background: #fff;
}
.list {
    flex: 1;
    border: 1px solid #828790;
    padding: 1px;
}
.inputs .name {
    width: 476px;
}
.inputs th {
    height: 24px;
    padding: 2px 0 0 5px;
    border-right: 1px solid #e4e6ea;
    border-bottom: 1px solid #d5d5d5;
    background: linear-gradient(#fff 45%, #f6f7f9 50%, #f2f3f5);
    text-align: left;
}
.inputs td {
    height: 20px;
    border-bottom: 1px solid #c8c8c8;
    padding: 2px 0 0 2px;
    font: 10px/17px "Liberation Mono", monospace;
}
.inputs td:first-child {
    display: flex;
    align-items: center;
    gap: 3px;
    padding-left: 1px;
    border-right: 1px solid #c8c8c8;
}
.inputs td svg {
    width: 16px;
    height: 16px;
}
.inputs tr:nth-child(even) td {
    background: #ebebeb;
}
.side {
    display: flex;
    flex-direction: column;
    justify-content: flex-end;
    gap: 11px;
    width: 103px;
    padding-bottom: 3px;
}
.btn {
    height: 19px;
    border: 1px solid #707070;
    border-radius: 3px;
    box-shadow: inset 0 0 0 1px #fbfbfb;
    background: linear-gradient(#f2f2f2 45%, #dddddd 50%, #cfcfcf);
    line-height: 17px;
}
.btn kbd {
    margin-left: 2px;
    font: 10px "Liberation Mono", monospace;
}
.actions {
    display: flex;
    justify-content: flex-end;
    gap: 8px;
    padding: 9px 3px 3px;
}
.actions .btn {
    width: 73px;
}
.btn.default {
    border-color: #3c7fb1;
    box-shadow: inset 0 0 0 1px #34cdf8;
    background: linear-gradient(#e6f3fa 45%, #cbe6f4 50%, #b8dcf0);
}
.resize {
    position: absolute;
    right: 2px;
    bottom: 2px;
    width: 9px;
    height: 9px;
    background: radial-gradient(#b0b0b0 1px, transparent 1px) 0 0 / 3px 3px;
    clip-path: polygon(100% 0, 100% 100%, 0 100%);
}

/* Speed widget */
.speed {
    position: absolute;
    right: 119px;
    top: 27px;
    display: flex;
    align-items: center;
    line-height: 15px;
}
.ball {
    width: 48px;
    height: 48px;
    border: 2px solid #fff;
    border-radius: 24px;
    outline: 1px solid #999;
    box-shadow: 1px 3px 6px #0007;
    background: radial-gradient(ellipse at 50% 8%, #fff 0, #5da888 12%, transparent 30%), linear-gradient(#1f7c50, #00683c 68%, #48cc5c 70%);
    color: #fff;
    font: 14px/44px "Liberation Sans", sans-serif;
    text-align: center;
    z-index: 1;
}
.pill {
    display: flex;
    align-items: center;
    gap: 4px;
    width: 104px;
    height: 39px;
    margin-left: -24px;
    padding: 2px 0 0 27px;
    border: 1px solid #999;
    border-radius: 0 20px 20px 0;
    box-shadow: 1px 3px 6px #0005;
    background: linear-gradient(#fafafa, #dcdcdc);
}
.pill p {
    width: 41px;
    text-align: right;
    white-space: nowrap;
    font-family: "DejaVu Sans Condensed", sans-serif;
    font-size: 9px;
}

/* Taskbar */
.taskbar {
    flex: none;
    display: flex;
    height: 40px;
    border-top: 1px solid #1c2a3a;
    background: linear-gradient(#a9c4e4 0, #7c9cc4 4px, #26364c 9px, #0a1018 14px, #06090f);
    position: relative;
}
.pin {
    display: flex;
    align-items: center;
    justify-content: center;
    width: 60px;
    height: 38px;
}
.pin.start {
    width: 54px;
}
.pin.ie {
    width: 66px;
    gap: 4px;
    color: #1e90f4;
}
.ie i {
    border: 4px solid transparent;
    border-left: 5px solid #1c78f0;
    border-right: 0;
}
.task {
    display: flex;
    align-items: center;
    justify-content: center;
    width: 58px;
    height: 38px;
    margin-right: 4px;
    border: 1px solid #8a949c;
    border-radius: 3px;
    background: linear-gradient(#c8dcf090, #8c9cac80 8px, #4a545c80 18px, #20262c80 19px, #2c343c80);
}
.task.active {
    border-color: #dde2e6;
    background: linear-gradient(#e6eef6, #b0b6ba 12px, #808488 19px, #5c6064 20px, #909498);
}
.task.stack {
    width: 53px;
    margin-right: 9px;
    box-shadow: 2px 0 #222a32, 3px 0 #8a949c;
}
.task.folder {
    width: 51px;
    box-shadow: 2px 0 #222a32, 3px 0 #8a949c, 5px 0 #222a32, 6px 0 #8a949c;
    margin-right: 11px;
}
.tray {
    display: flex;
    align-items: center;
    gap: 8px;
    height: 38px;
    margin-left: auto;
    color: #fff;
}
.keyboard {
    margin-right: 6px;
}
.nvidia {
    margin-right: 24px;
}
.tray time {
    width: 118px;
    line-height: 17px;
    text-align: center;
    margin-left: -2px;
}
.show-desktop {
    width: 14px;
    border: 1px solid #6a7480;
    background: linear-gradient(#8ca0b8, #343c48 30%, #14181e);
}

.watermark {
    position: absolute;
    left: 0;
    top: 0;
    width: 100%;
    height: 100%;
    pointer-events: none;
    z-index: 5;
}
.watermark text {
    font: bold 33px "DejaVu Sans Mono", monospace;
    fill: rgba(255, 255, 255, 0.07);
    stroke: rgba(128, 128, 128, 0.35);
    stroke-width: 1px;
}
```

FILE: script.js
```js
const chartLeft = 1144;
const step = 8;

// [up, high, open/close top, open/close bottom, low]
const candles = [
    [1, 244, 244, 271, 287], [0, 234, 246, 265, 286], [1, 251, 254, 263, 269], [0, 260, 260, 276, 294],
    [0, 257, 273, 274, 286], [0, 261, 275, 291, 291], [1, 244, 257, 291, 292], [1, 225, 236, 253, 263],
    [1, 179, 187, 235, 235], [1, 174, 187, 196, 203], [0, 182, 186, 188, 200], [1, 187, 191, 196, 218],
    [0, 191, 192, 203, 216], [1, 186, 200, 205, 222], [0, 192, 202, 206, 240], [1, 186, 192, 206, 219],
    [0, 187, 199, 211, 222], [0, 186, 208, 227, 227], [0, 225, 228, 237, 266], [0, 225, 233, 235, 242],
    [0, 218, 236, 238, 266], [0, 244, 244, 260, 265], [0, 251, 260, 279, 291], [0, 260, 278, 279, 286],
    [0, 280, 280, 315, 316], [0, 291, 311, 313, 313], [0, 300, 312, 313, 315], [1, 286, 293, 313, 313],
    [1, 258, 262, 295, 295], [0, 249, 259, 266, 295], [0, 259, 264, 289, 299], [1, 213, 228, 291, 291],
    [0, 217, 228, 260, 265], [1, 246, 262, 263, 278], [0, 246, 249, 265, 275], [1, 246, 262, 269, 275],
    [0, 246, 260, 294, 294], [0, 293, 294, 333, 334], [1, 306, 324, 334, 342], [0, 324, 330, 389, 389],
    [0, 375, 388, 402, 402], [0, 400, 401, 420, 443], [0, 411, 419, 427, 445], [1, 309, 319, 430, 449],
    [0, 260, 320, 333, 333], [0, 312, 332, 352, 375], [0, 335, 356, 449, 464], [1, 405, 411, 451, 456]
];

document.getElementById('candles').innerHTML = candles.map(([up, high, top, bottom, low], i) => {
    const x = chartLeft + i * step;
    return `<g fill="${up ? '#f00' : '#0f0'}"><rect x="${x}" y="${high}" width="1" height="${low - high}"/>` +
        `<rect x="${x - 2}" y="${top}" width="5" height="${bottom - top}"/></g>`;
}).join('');

// Price axis
const prices = [['1.35675', 183], ['1.35655', 216], ['1.35630', 256], ['1.35610', 288], ['1.35585', 328],
    ['1.35565', 361], ['1.35540', 401], ['1.35520', 434], ['1.35495', 474]];
document.getElementById('prices').innerHTML = prices.map(([label, y]) =>
    `<path d="M1880 ${y}.5h3" stroke="#fff"/><text x="1886" y="${y + 3}" class="axis">${label}</text>`).join('') +
    '<rect x="1882" y="137" width="38" height="11" fill="#00f"/><text x="1886" y="146" class="axis blue">1.35699</text>' +
    '<rect x="1882" y="406" width="38" height="11" fill="#fff"/><text x="1886" y="415" class="axis dark">1.35534</text>';

// Time axis
const times = ['09:14', '09:22', '09:30', '09:38', '09:46', '09:54', '10:02'];
document.getElementById('times').innerHTML = times.map((t, i) => {
    const x = 1119 + i * 64;
    return `<path d="M${x + 1}.5 484v3" stroke="#fff"/><text x="${x}" y="496" class="axis">14 Dec ${t}</text>`;
}).join('');

// Strategy tester results, row index -> cells
const results = {
    0: { profit: '3.24', balance: '1080.58' },
    5: { profit: '3.42', balance: '1084.00' },
    7: { profit: '3.39', balance: '1087.39' },
    8: { profit: '4.38', balance: '1091.77' },
    9: { profit: '4.92', balance: '1096.69' },
    11: { profit: '4.50', balance: '1101.19' },
    13: { profit: '3.42', balance: '1104.61' },
    16: { id: '157', time: '2018.02.14 14:30', type: 'buy', order: '82', lots: '0.03', price: '1331.19' }
};
const fields = ['id', 'time', 'type', 'order', 'lots', 'price', 'sl', 'tp', 'profit', 'balance'];
const orderIcon = '<svg width="14" height="15"><path d="M.5.5h8l3 3v10H.5z" fill="#fff" stroke="#666"/><circle cx="10" cy="11" r="3.500" fill="#2496e0"/></svg>';
let rows = '';
for (let i = 0; i < 18; i++) {
    const row = results[i] || {};
    rows += '<tr>' + fields.map(f => {
        const text = row[f] || '';
        return f === 'id' && text ? `<td><div class="order">${orderIcon}${text}</div></td>` : `<td>${text}</td>`;
    }).join('') + '</tr>';
}
document.getElementById('results').innerHTML = rows;

// Browser tabs showing through the window glass
const blobs = [[526, '#e08090'], [598, '#80b840'], [665, '#60c8c8'], [736, '#e87888'], [806, '#e87888'], [877, '#e87888'],
    [948, '#e87888'], [1018, '#f0a0a8'], [1088, '#f0a0b0'], [1157, '#98c040'], [1228, '#68bcf8'], [1298, '#68bcf8'],
    [1368, '#68bcf8'], [1438, '#68bcf8'], [1509, '#68bcf8'], [1579, '#68bcf8'], [1650, '#8898c0'], [1720, '#b8ccf0'], [1767, '#b0c4ec'], [1855, '#c4d4f4']];
function drawGlass(id, dx, y, opacity) {
    document.getElementById(id).innerHTML = `<g opacity="${opacity}">` + blobs.map(([x, c]) =>
        `<rect x="${x - dx - 5}" y="${y - 7}" width="10" height="14" fill="${c}"/>` +
        (x < 1600 ? `<circle cx="${x - dx + 16}" cy="${y}" r="4" fill="#bcc4f0"/><circle cx="${x - dx + 34}" cy="${y}" r="4" fill="#b4bce8"/>` : '')).join('') + '</g>';
}
drawGlass('glass', 0, 17, 1);
drawGlass('dialogGlass', 22, 3, 0.6);
```
